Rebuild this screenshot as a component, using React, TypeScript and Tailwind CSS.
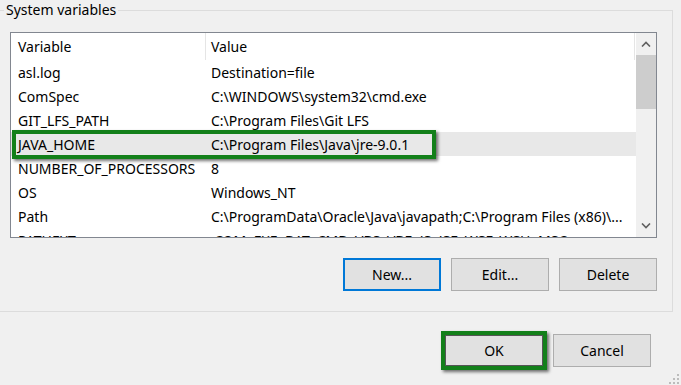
const rows: [string, string][] = [
  ['asl.log', 'Destination=file'],
  ['ComSpec', 'C:\\WINDOWS\\system32\\cmd.exe'],
  ['GIT_LFS_PATH', 'C:\\Program Files\\Git LFS'],
  ['JAVA_HOME', 'C:\\Program Files\\Java\\jre-9.0.1'],
  ['NUMBER_OF_PROCESSORS', '8'],
  ['OS', 'Windows_NT'],
  ['Path', 'C:\\ProgramData\\Oracle\\Java\\javapath;C:\\Program Files (x86)\\...'],
  ['PATHEXT', '.COM;.EXE;.BAT;.CMD;.VBS;.VBE;.JS;.JSE;.WSF;.WSH;.MSC'],
];

function Chevron({ up }: { up?: boolean }) {
  return (
    <svg width="10" height="6" viewBox="0 0 10 6">
      <path
        d={up ? 'M1 5.5 L5 1.5 L9 5.5' : 'M1 0.5 L5 4.5 L9 0.5'}
        fill="none"
        stroke="#606060"
        strokeWidth="1.6"
      />
    </svg>
  );
}

function WinButton({ label, focused }: { label: string; focused?: boolean }) {
  return (
    <button
      className={`w-[98px] h-[33px] bg-[#e1e1e1] text-black text-[14px] ${
        focused ? 'border-2 border-[#0078d7]' : 'border border-[#adadad]'
      }`}
    >
      {label}
    </button>
  );
}

export default function App() {
  return (
    <div
      className="relative w-[681px] h-[385px] bg-[#f0f0f0] overflow-hidden text-black"
      style={{ fontFamily: '"Noto Sans", "Open Sans", sans-serif' }}
    >
      {/* System variables group */}
      <fieldset className="w-[673px] h-[312px] border border-l-0 border-[#dcdcdc]">
        <legend className="ml-[4px] px-[2px] text-[14px] leading-[20px]">System variables</legend>

        <div className="pl-[10px] mt-[12px] w-[657px]">
          {/* list view */}
          <div className="relative flex w-[647px] h-[206px] bg-white border border-[#828790] overflow-hidden">
            <div className="w-[625px] overflow-hidden text-[14px]">
              {/* header */}
              <div className="flex h-[27px] items-center">
                <div className="w-[194px] pl-[7px]">Variable</div>
                <div className="w-px h-full bg-[#e5e5e5]" />
                <div className="flex-1 pl-[5px]">Value</div>
                <div className="w-px h-full bg-[#e5e5e5] mr-[1px]" />
              </div>
              {rows.map(([name, value]) => (
                <div
                  key={name}
                  className={`flex h-[24px] items-center whitespace-nowrap ${
                    name === 'JAVA_HOME' ? 'bg-[#e8e8e8]' : ''
                  }`}
                >
                  <div className="w-[195px] pl-[7px] overflow-hidden">{name}</div>
                  <div className="flex-1 pl-[5px] overflow-hidden">{value}</div>
                </div>
              ))}
            </div>

            {/* scrollbar */}
            <div className="flex flex-col w-[20px] h-full bg-[#f0f0f0]">
              <div className="h-[22px] flex items-center justify-center">
                <Chevron up />
              </div>
              <div className="h-[54px] bg-[#cdcdcd]" />
              <div className="flex-1" />
              <div className="h-[22px] flex items-center justify-center">
                <Chevron />
              </div>
            </div>

            {/* highlight around JAVA_HOME */}
            <div className="absolute left-[1px] top-[97px] w-[424px] h-[29px] border-4 border-[#13801a] shadow-[2px_2px_3px_rgba(0,0,0,0.55)]" />
          </div>

          {/* New / Edit / Delete */}
          <div className="flex justify-end gap-[10px] w-[647px] mt-[20px]">
            <WinButton label="New..." focused />
            <WinButton label="Edit..." />
            <WinButton label="Delete" />
          </div>
        </div>
      </fieldset>

      {/* OK / Cancel */}
      <div className="flex items-center justify-end gap-[6px] pr-[30px] mt-[19px]">
        <div className="border-4 border-[#13801a] shadow-[2px_2px_3px_rgba(0,0,0,0.55)]">
          <button className="block w-[98px] h-[31px] bg-[#e1e1e1] border border-[#555] text-[14px]">OK</button>
        </div>
        <WinButton label="Cancel" />
      </div>

      {/* resize grip */}
      <svg className="absolute right-0 bottom-0" width="12" height="12" viewBox="0 0 12 12">
        <g fill="#bcbcbc">
          <rect x="8" y="1" width="2" height="2" />
          <rect x="4" y="5" width="2" height="2" />
          <rect x="8" y="5" width="2" height="2" />
          <rect x="0" y="9" width="2" height="2" />
          <rect x="4" y="9" width="2" height="2" />
          <rect x="8" y="9" width="2" height="2" />
        </g>
      </svg>
    </div>
  );
}
